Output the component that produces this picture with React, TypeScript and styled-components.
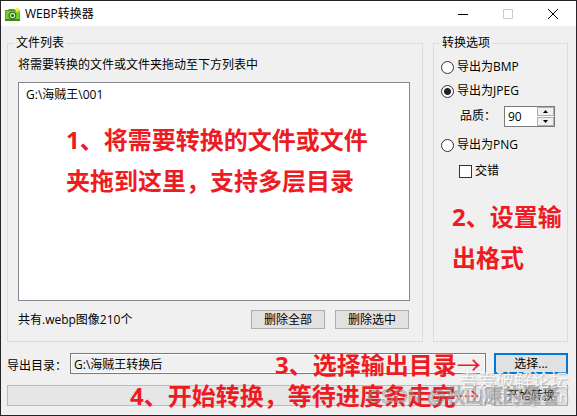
import React, { useState } from "react";
import styled, { createGlobalStyle } from "styled-components";

const GlobalStyle = createGlobalStyle`
  * { box-sizing: border-box; }
  body { margin: 0; }
  body, button, input {
    font-family: "Open Sans", "Noto Sans CJK SC", sans-serif;
    font-size: 12px;
    line-height: 16px;
    color: #000;
  }
`;

const Window = styled.main`
  position: relative;
  display: flex;
  flex-direction: column;
  min-height: 100vh;
  overflow: hidden;
  background: #f0f0f0;
  border: 1px solid #262427;
`;

const TitleBar = styled.header`
  display: flex;
  align-items: center;
  height: 25px;
  padding: 0 1px 0 3px;
  background: #fff;
`;

const AppTitle = styled.h1`
  flex: 1;
  margin: 0 0 0 4px;
  font-size: 12px;
  font-weight: 400;
`;

const CaptionButton = styled.button<{ $muted?: boolean }>`
  display: grid;
  place-items: center;
  width: 45px;
  height: 25px;
  padding: 0;
  border: 0;
  background: transparent;
  color: ${(p) => (p.$muted ? "#ccc" : "#000")};
`;

const Content = styled.div`
  display: flex;
  flex: 1;
  flex-direction: column;
  padding: 9px 8px 9px 6px;
`;

const Columns = styled.div`
  display: flex;
  flex: 1;
  gap: 10px;
`;

const Group = styled.fieldset<{ $width?: number }>`
  display: flex;
  flex-direction: column;
  min-width: 0;
  margin: 0;
  padding: 0;
  border: 1px solid #dcdcdc;
  ${(p) => (p.$width ? `flex: 0 0 ${p.$width}px;` : "flex: 1;")}
`;

const Legend = styled.legend`
  margin-left: 6px;
  padding: 0 2px;
`;

const FilePane = styled.div`
  display: flex;
  flex: 1;
  flex-direction: column;
  height: 100%;
  padding: 6px 12px 12px 10px;
`;

const Hint = styled.p`
  margin: 0 0 9px;
`;

const FileList = styled.ul`
  flex: 1;
  min-height: 160px;
  margin: 0;
  padding: 4px 7px;
  list-style: none;
  background: #fff;
  border: 1px solid #828790;
`;

const ListFooter = styled.div`
  display: flex;
  align-items: center;
  gap: 10px;
  margin-top: 9px;
  padding-right: 1px;
`;

const Summary = styled.span`
  flex: 1;
`;

const PushButton = styled.button<{ $focused?: boolean; $tall?: boolean }>`
  flex: none;
  width: 74px;
  height: ${(p) => (p.$tall ? 21 : 19)}px;
  padding: 0;
  line-height: 16px;
  background: #e1e1e1;
  border: ${(p) => (p.$focused ? "2px solid #0078d7" : "1px solid #adadad")};
`;

const Options = styled.div`
  display: flex;
  flex-direction: column;
  padding: 4px 6px 0 7px;
`;

const Choice = styled.label<{ $nested?: boolean }>`
  display: flex;
  align-items: center;
  gap: 3px;
  height: 24px;
  margin-left: ${(p) => (p.$nested ? 18 : 0)}px;
  margin-top: ${(p) => (p.$nested ? 2 : 0)}px;
`;

const Radio = styled.input`
  appearance: none;
  width: 13px;
  height: 13px;
  margin: 0;
  border: 1px solid #333;
  border-radius: 50%;
  background: #fff;
  &:checked {
    background: radial-gradient(circle, #222 3px, #fff 4px);
  }
`;

const Check = styled.input`
  appearance: none;
  width: 13px;
  height: 13px;
  margin: 0;
  border: 1px solid #333;
  background: #fff;
  &:checked {
    background: #333;
  }
`;

const QualityRow = styled.div`
  display: flex;
  align-items: flex-start;
  justify-content: space-between;
  height: 30px;
  padding: 3px 6px 0 19px;
  line-height: 20px;
`;

const Spinner = styled.div`
  display: flex;
  width: 51px;
  height: 21px;
  background: #fff;
  border: 1px solid #7a7a7a;
`;

const QualityInput = styled.input`
  flex: 1;
  min-width: 0;
  padding: 0 3px;
  border: 0;
  background: transparent;
`;

const Steps = styled.div`
  display: flex;
  flex-direction: column;
  gap: 1px;
  width: 17px;
  background: #fff;
`;

const Step = styled.button`
  display: grid;
  flex: 1;
  place-items: center;
  min-height: 0;
  padding: 0;
  line-height: 0;
  background: #f0f0f0;
  border: 1px solid #b0b0b0;
`;

const OutputRow = styled.div`
  display: flex;
  align-items: center;
  gap: 8px;
  margin-top: 11px;
`;

const OutputLabel = styled.label`
  flex: none;
  width: 55px;
  height: 21px;
  padding-top: 5px;
  white-space: nowrap;
`;

const PathInput = styled.input`
  flex: 1;
  min-width: 0;
  height: 21px;
  padding: 0 3px;
  background: #f0f0f0;
  border: 1px solid #7a7a7a;
  box-shadow: inset 0 0 0 1px #fff;
`;

const ConvertRow = styled.div`
  display: flex;
  gap: 8px;
  margin-top: 11px;
`;

const Progress = styled.div`
  flex: 1;
  height: 21px;
  background: #e6e6e6;
  border: 1px solid #bcbcbc;
`;

const Note = styled.p<{ $x: number; $y: number }>`
  position: absolute;
  left: ${(p) => p.$x}px;
  top: ${(p) => p.$y}px;
  margin: 0;
  color: #ed1c24;
  font: 700 24px/41px "Open Sans", "Noto Sans CJK SC", sans-serif;
  white-space: nowrap;
  pointer-events: none;
`;

const Arrow = styled.span`
  font-family: "Noto Sans CJK SC", sans-serif;
  font-weight: 400;
`;

const Watermark = styled.span<{ $right: number; $bottom: number; $size: number }>`
  position: absolute;
  right: ${(p) => p.$right}px;
  bottom: ${(p) => p.$bottom}px;
  font-size: ${(p) => p.$size}px;
  line-height: 24px;
  color: rgba(255, 255, 255, 0.85);
  text-shadow: 1px 1px 2px #aaa;
  white-space: nowrap;
  pointer-events: none;
`;

const OutlinedWatermark = styled(Watermark)`
  font-family: "Liberation Sans", "Noto Sans CJK SC", sans-serif;
  color: rgba(255, 255, 255, 0.3);
  text-shadow: none;
  -webkit-text-stroke: 1px rgba(90, 90, 90, 0.45);
`;

const CameraIcon = () => (
  <svg width="17" height="16" viewBox="0 0 17 16" aria-hidden="true">
    <path d="M1 4h3l1-1h5l1 1h4.500q.5 0 .5.5V14.500q0 .5-.5.5h-14q-.5 0-.5-.5z" fill="#4d9e20" />
    <path d="M1.500 5h14v8h-14z" fill="#73c930" />
    <path d="M1 13h15v1.500q0 .5-.5.5h-14q-.5 0-.5-.5z" fill="#45861f" />
    <circle cx="8.500" cy="9.500" r="3.800" fill="#2e6819" />
    <circle cx="8.500" cy="9.500" r="2.700" fill="#d9efc8" />
    <circle cx="8.500" cy="9.500" r="1.500" fill="#285b1c" />
    <path d="M12.500 1l1 1.500 2-.5-.5 2 1 1.500-2 0-1.500 1-.5-2-1.500-1 1.500-.5z" fill="#f5ec42" />
  </svg>
);

export default function App() {
  const [format, setFormat] = useState("JPEG");
  const [quality, setQuality] = useState(90);
  const radio = (name: string) => (
    <Choice>
      <Radio type="radio" name="format" checked={format === name} onChange={() => setFormat(name)} />
      <span>导出为{name}</span>
    </Choice>
  );

  return (
    <>
      <GlobalStyle />
      <Window>
        <TitleBar>
          <CameraIcon />
          <AppTitle>WEBP转换器</AppTitle>
          <CaptionButton aria-label="最小化">
            <svg width="10" height="10" stroke="currentColor"><path d="M0 5.500h10" /></svg>
          </CaptionButton>
          <CaptionButton aria-label="最大化" $muted disabled>
            <svg width="10" height="10" stroke="currentColor" fill="none"><path d="M.5.5h9v9h-9z" /></svg>
          </CaptionButton>
          <CaptionButton aria-label="关闭">
            <svg width="10" height="10" stroke="currentColor"><path d="M0 0l10 10M10 0L0 10" /></svg>
          </CaptionButton>
        </TitleBar>
        <Content>
          <Columns>
            <Group>
              <Legend>文件列表</Legend>
              <FilePane>
                <Hint>将需要转换的文件或文件夹拖动至下方列表中</Hint>
                <FileList><li>G:\海贼王\001</li></FileList>
                <ListFooter>
                  <Summary>共有.webp图像210个</Summary>
                  <PushButton>删除全部</PushButton>
                  <PushButton>删除选中</PushButton>
                </ListFooter>
              </FilePane>
            </Group>
            <Group $width={135}>
              <Legend>转换选项</Legend>
              <Options>
                {radio("BMP")}
                {radio("JPEG")}
                <QualityRow>
                  <label htmlFor="quality">品质：</label>
                  <Spinner>
                    <QualityInput
                      id="quality"
                      value={quality}
                      onChange={(e) => setQuality(Number(e.target.value) || 0)}
                    />
                    <Steps>
                      <Step aria-label="增加" onClick={() => setQuality(Math.min(100, quality + 1))}>
                        <svg width="5" height="3"><path d="M0 3L2.500 0 5 3z" /></svg>
                      </Step>
                      <Step aria-label="减少" onClick={() => setQuality(Math.max(0, quality - 1))}>
                        <svg width="5" height="3"><path d="M0 0L2.500 3 5 0z" /></svg>
                      </Step>
                    </Steps>
                  </Spinner>
                </QualityRow>
                {radio("PNG")}
                <Choice $nested><Check type="checkbox" />交错</Choice>
              </Options>
            </Group>
          </Columns>
          <OutputRow>
            <OutputLabel htmlFor="output">导出目录：</OutputLabel>
            <PathInput id="output" defaultValue={"G:\\海贼王转换后"} />
            <PushButton $tall $focused>选择...</PushButton>
          </OutputRow>
          <ConvertRow>
            <Progress role="progressbar" aria-label="进度" aria-valuenow={0} />
            <PushButton $tall>开始转换</PushButton>
          </ConvertRow>
        </Content>
        <Note $x={65} $y={118}>1、将需要转换的文件或文件<br />夹拖到这里，支持多层目录</Note>
        <Note $x={451} $y={195}>2、设置输<br />出格式</Note>
        <Note $x={274} $y={342}>3、选择输出目录<Arrow>→</Arrow></Note>
        <Note $x={129} $y={373}>4、开始转换，等待进度条走完<Arrow>→</Arrow></Note>
        <Watermark $right={8} $bottom={23} $size={18}>吾爱破解论坛</Watermark>
        <Watermark $right={8} $bottom={7} $size={15}>www.52pojie.cn</Watermark>
        <OutlinedWatermark $right={16} $bottom={6} $size={19}>CSDN @秋山原的墨者</OutlinedWatermark>
      </Window>
    </>
  );
}
